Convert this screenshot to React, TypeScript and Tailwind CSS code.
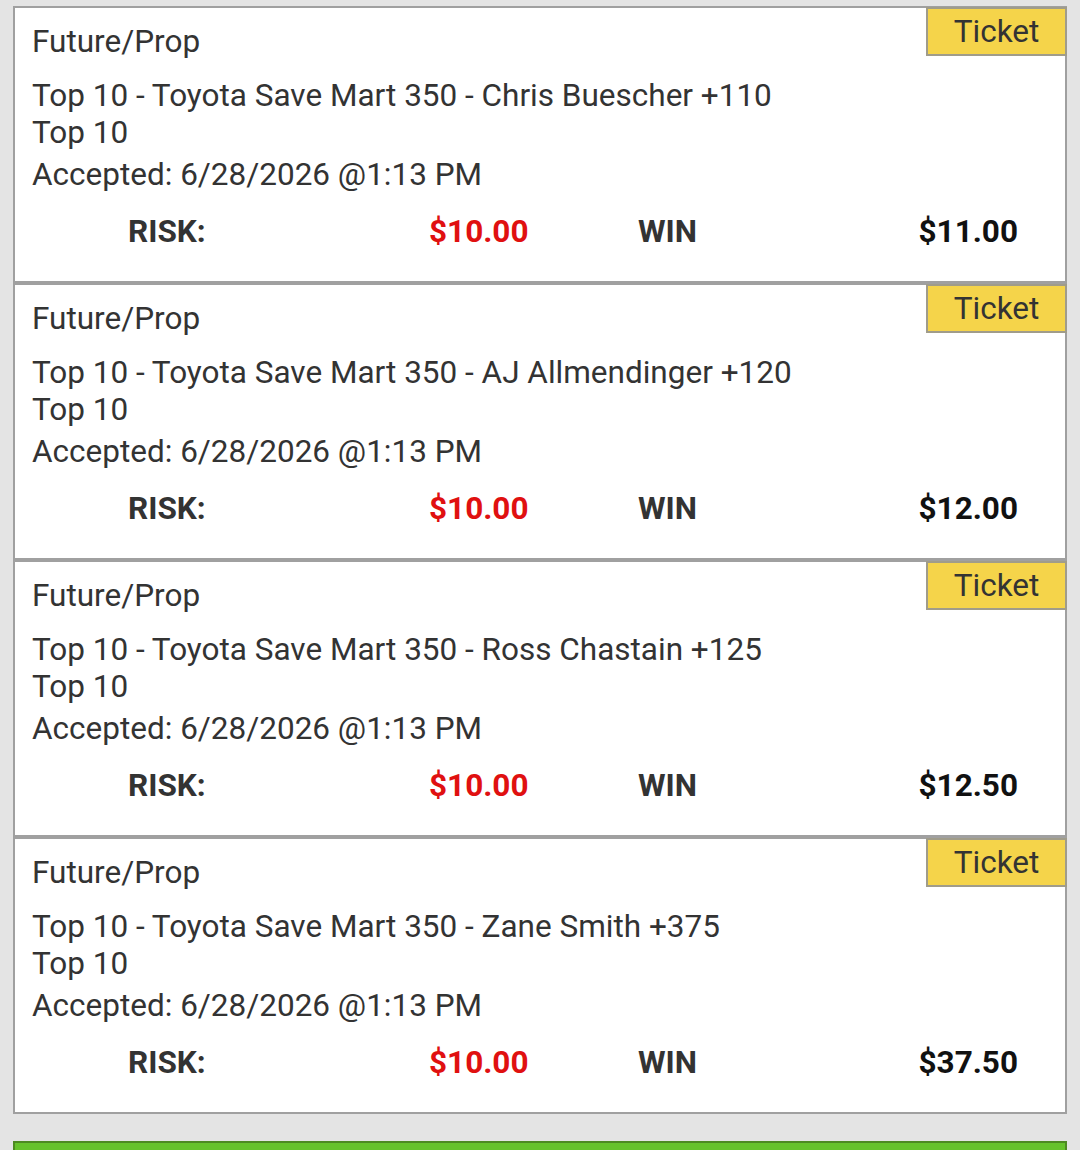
const bets = [
  { pick: 'Chris Buescher +110', win: '$11.00' },
  { pick: 'AJ Allmendinger +120', win: '$12.00' },
  { pick: 'Ross Chastain +125', win: '$12.50' },
  { pick: 'Zane Smith +375', win: '$37.50' },
]

function BetCard({ pick, win }: { pick: string; win: string }) {
  return (
    <div className="relative bg-white border-2 border-[#a0a0a0] pl-[17px] pt-[15px] pb-[31px]">
      <div className="absolute top-[-1px] right-[-2px] w-[141px] h-[49px] bg-[#f5d44a] border-2 border-[#a09c8a] flex items-center justify-center text-[#333]">
        Ticket
      </div>
      <div className="leading-[37px]">Future/Prop</div>
      <div className="mt-[17px] leading-[37px]">
        <div>Top 10 - Toyota Save Mart 350 - {pick}</div>
        <div>Top 10</div>
      </div>
      <div className="mt-[5px] leading-[37px]">Accepted: 6/28/2026 @1:13 PM</div>
      <div className="mt-[20px] grid grid-cols-[301px_209px_1fr_auto] pl-[96px] pr-[47px] font-bold leading-[37px]">
        <div>RISK:</div>
        <div className="text-[#e01010]">$10.00</div>
        <div>WIN</div>
        <div className="text-right text-[#111]">{win}</div>
      </div>
    </div>
  )
}

export default function App() {
  return (
    <div className="min-h-[1150px] bg-[#e4e4e4] px-[13px] pt-[6px] font-['Roboto',sans-serif] text-[31.5px] text-[#333]">
      {bets.map((b, i) => (
        <BetCard key={i} pick={b.pick} win={b.win} />
      ))}
      <div className="mt-[27px] h-[30px] bg-[#66c22c] border-2 border-[#4d8a22]" />
    </div>
  )
}
